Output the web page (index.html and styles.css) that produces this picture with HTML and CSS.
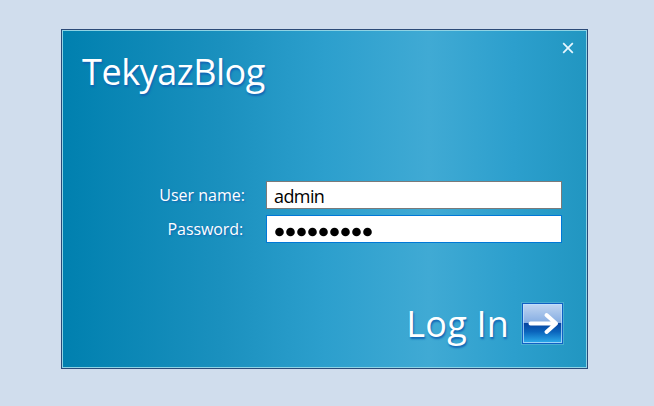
FILE: index.html
```html
<!DOCTYPE html>
<html lang="en">
<head>
    <meta charset="UTF-8">
    <meta name="viewport" content="width=device-width, initial-scale=1.0">
    <title>TekyazBlog</title>
    <link rel="stylesheet" href="styles.css">
</head>
<body>
    <form class="login-window">
        <header class="login-header">
            <h1 class="login-title">TekyazBlog</h1>
            <button type="button" class="close-button" aria-label="Close">
                <svg width="12" height="12" viewBox="0 0 12 12">
                    <path d="M1.2 1.2L10.8 10.8M10.8 1.2L1.2 10.8" fill="none" stroke="#e8f7ff" stroke-width="1.7"/>
                </svg>
            </button>
        </header>

        <div class="login-fields">
            <label for="username" class="field-label">User name:</label>
            <input type="text" id="username" class="field-input" value="admin">
            <label for="password" class="field-label field-label-password">Password:</label>
            <div class="field-input field-active" id="password">
                <svg width="100" height="10" viewBox="0 0 100 10" fill="#000">
                    <circle cx="5.5" cy="5" r="4.3"/>
                    <circle cx="16.5" cy="5" r="4.3"/>
                    <circle cx="27.5" cy="5" r="4.3"/>
                    <circle cx="38.5" cy="5" r="4.3"/>
                    <circle cx="49.5" cy="5" r="4.3"/>
                    <circle cx="60.5" cy="5" r="4.3"/>
                    <circle cx="71.5" cy="5" r="4.3"/>
                    <circle cx="82.5" cy="5" r="4.3"/>
                    <circle cx="93.5" cy="5" r="4.3"/>
                </svg>
            </div>
        </div>

        <footer class="login-footer">
            <span class="login-text">Log In</span>
            <button type="button" class="login-button" aria-label="Log In">
                <svg width="39" height="39" viewBox="0 0 39 39">
                    <path d="M7.5 19.5H33M23.5 11L33 19.5L23.5 28" fill="none" stroke="#fff" stroke-width="4" stroke-linecap="round" stroke-linejoin="round"/>
                </svg>
            </button>
        </footer>
    </form>
</body>
</html>
```

FILE: styles.css
```css
* {
    margin: 0;
    padding: 0;
    box-sizing: border-box;
}

body {
    background-color: #d0dded;
    font-family: 'Open Sans', 'Noto Sans', sans-serif;
    height: 406px;
    padding: 29px 0 0 61px;
    overflow: hidden;
}

.login-window {
    width: 527px;
    height: 340px;
    display: flex;
    flex-direction: column;
    border: 1px solid #2b4a78;
    box-shadow: inset 0 0 0 1px #8fd3e4;
    background: linear-gradient(90deg, #0080af 0%, #1a90be 30%, #2c9fcd 50%, #40aad4 70%, #2c9fcd 86%, #2196c1 100%);
    color: #fff;
}

.login-header {
    display: flex;
    justify-content: space-between;
    height: 151px;
    padding: 12px 13px 0 20px;
}

.login-title,
.login-text {
    font-size: 36px;
    font-weight: 400;
    line-height: 60px;
    white-space: nowrap;
    text-shadow: 1px 2px 2px #1264b4;
}

.login-title {
    letter-spacing: -0.45px;
}

.close-button {
    width: 12px;
    height: 12px;
    border: none;
    background: none;
}

.close-button svg,
.login-button svg,
.field-input svg {
    display: block;
}

.login-fields {
    display: grid;
    grid-template-columns: 183px 296px;
    grid-template-rows: 28px 28px;
    column-gap: 21px;
    row-gap: 6px;
}

.field-label {
    font-size: 16px;
    line-height: 28px;
    text-align: right;
    white-space: nowrap;
    text-shadow: 1px 1px 2px #1264b4;
}

.field-label-password {
    padding-right: 2px;
    letter-spacing: -0.1px;
}

.field-input {
    width: 296px;
    height: 28px;
    border: 1px solid #7a7a7a;
    background-color: #fff;
    padding: 2px 7px 0;
    color: #000;
    font-family: inherit;
    font-size: 18px;
    letter-spacing: -0.6px;
    outline: none;
}

.field-active {
    border-color: #0078d7;
    padding-top: 11px;
}

.login-footer {
    display: flex;
    justify-content: flex-end;
    margin-top: 59px;
    padding-right: 23px;
    gap: 12px;
}

.login-text {
    line-height: 43px;
    letter-spacing: 0.2px;
}

.login-button {
    width: 43px;
    height: 43px;
    padding: 1px;
    border: 1px solid #48acd0;
    background: linear-gradient(#c4d8f2 0%, #84ace2 49%, #0845a0 50%, #0a64bc 70%, #30b4f0 100%);
    box-shadow: inset 0 0 0 1px #1060c4, inset 0 0 0 2px rgba(190, 225, 255, 0.75);
}
```
